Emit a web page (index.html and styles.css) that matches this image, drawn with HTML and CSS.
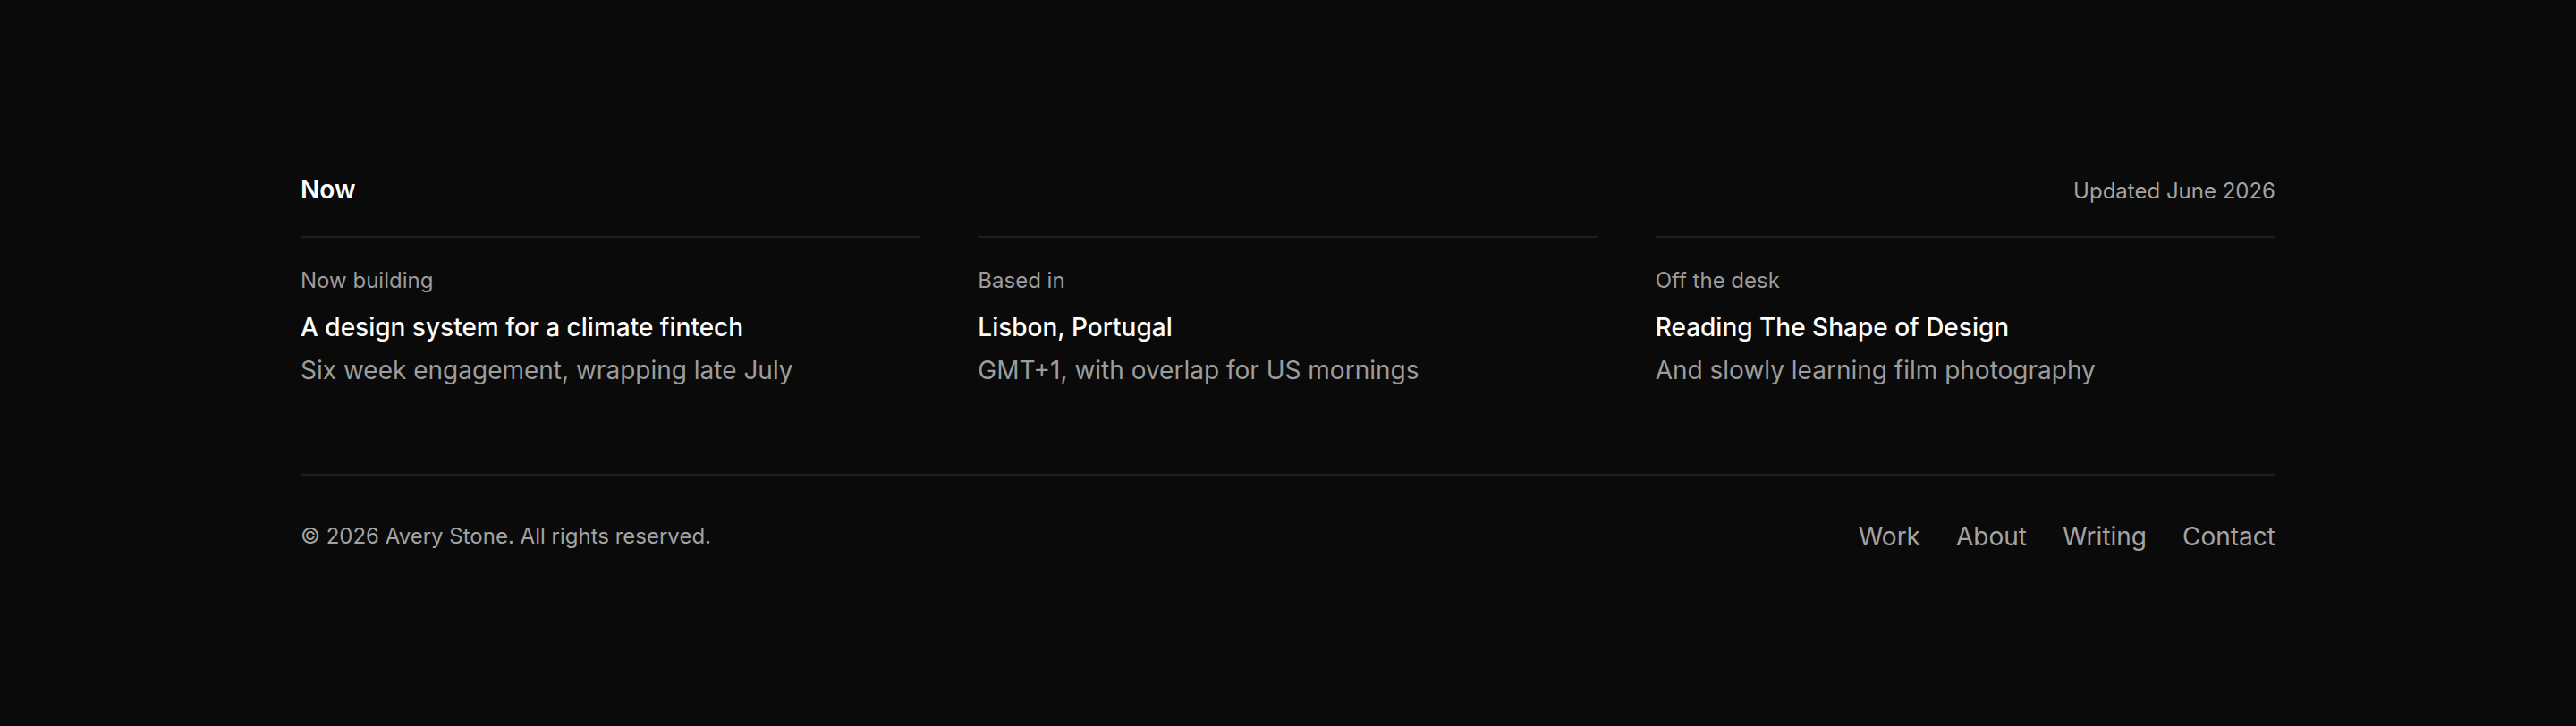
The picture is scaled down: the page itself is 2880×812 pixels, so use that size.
FILE: index.html
```html
<!DOCTYPE html>
<html lang="en">
<head>
<meta charset="utf-8">
<title>Now — Avery Stone</title>
<link rel="stylesheet" href="styles.css">
</head>
<body>
<main class="page">
  <section class="now">
    <header class="now-head">
      <h2 class="now-title">Now</h2>
      <span class="now-updated">Updated June 2026</span>
    </header>
    <div class="now-grid">
      <article class="now-item">
        <p class="item-label">Now building</p>
        <h3 class="item-title">A design system for a climate fintech</h3>
        <p class="item-desc">Six week engagement, wrapping late July</p>
      </article>
      <article class="now-item">
        <p class="item-label">Based in</p>
        <h3 class="item-title">Lisbon, Portugal</h3>
        <p class="item-desc">GMT+1, with overlap for US mornings</p>
      </article>
      <article class="now-item">
        <p class="item-label">Off the desk</p>
        <h3 class="item-title">Reading The Shape of Design</h3>
        <p class="item-desc">And slowly learning film photography</p>
      </article>
    </div>
  </section>
  <footer class="footer">
    <p class="copyright">© 2026 Avery Stone. All rights reserved.</p>
    <nav class="footer-nav">
      <a href="#">Work</a>
      <a href="#">About</a>
      <a href="#">Writing</a>
      <a href="#">Contact</a>
    </nav>
  </footer>
</main>
</body>
</html>
```

FILE: styles.css
```css
* { box-sizing: border-box; }
html, body {
  margin: 0;
  padding: 0;
  background: #0a0a0a;
}
body {
  font-family: Inter, "Noto Sans", "Liberation Sans", sans-serif;
  color: #fafafa;
  min-height: 812px;
}
.page {
  width: 2208px;
  margin: 0 auto;
  padding: 192px 0 96px;
}
.now-head {
  display: flex;
  justify-content: space-between;
  align-items: baseline;
  margin-bottom: 32px;
}
.now-title {
  margin: 0;
  font-size: 28px;
  line-height: 40px;
  font-weight: 600;
  color: #ffffff;
}
.now-updated {
  font-size: 24px;
  line-height: 32px;
  color: #a3a3a3;
}
.now-grid {
  display: grid;
  grid-template-columns: repeat(3, 1fr);
  gap: 64px;
}
.now-item {
  border-top: 2px solid #1f1f1f;
  padding-top: 32px;
}
.item-label {
  margin: 0;
  font-size: 24px;
  line-height: 32px;
  color: #9c9c9c;
}
.item-title {
  margin: 16px 0 0;
  font-size: 28px;
  line-height: 40px;
  font-weight: 500;
  color: #ffffff;
}
.item-desc {
  margin: 8px 0 0;
  font-size: 28px;
  line-height: 40px;
  color: #9c9c9c;
}
.footer {
  margin-top: 96px;
  border-top: 2px solid #1f1f1f;
  padding-top: 48px;
  display: flex;
  justify-content: space-between;
  align-items: center;
}
.copyright {
  margin: 0;
  font-size: 24px;
  line-height: 32px;
  color: #a3a3a3;
}
.footer-nav {
  display: flex;
  gap: 40px;
}
.footer-nav a {
  font-size: 28px;
  line-height: 40px;
  color: #a3a3a3;
  text-decoration: none;
}
```
